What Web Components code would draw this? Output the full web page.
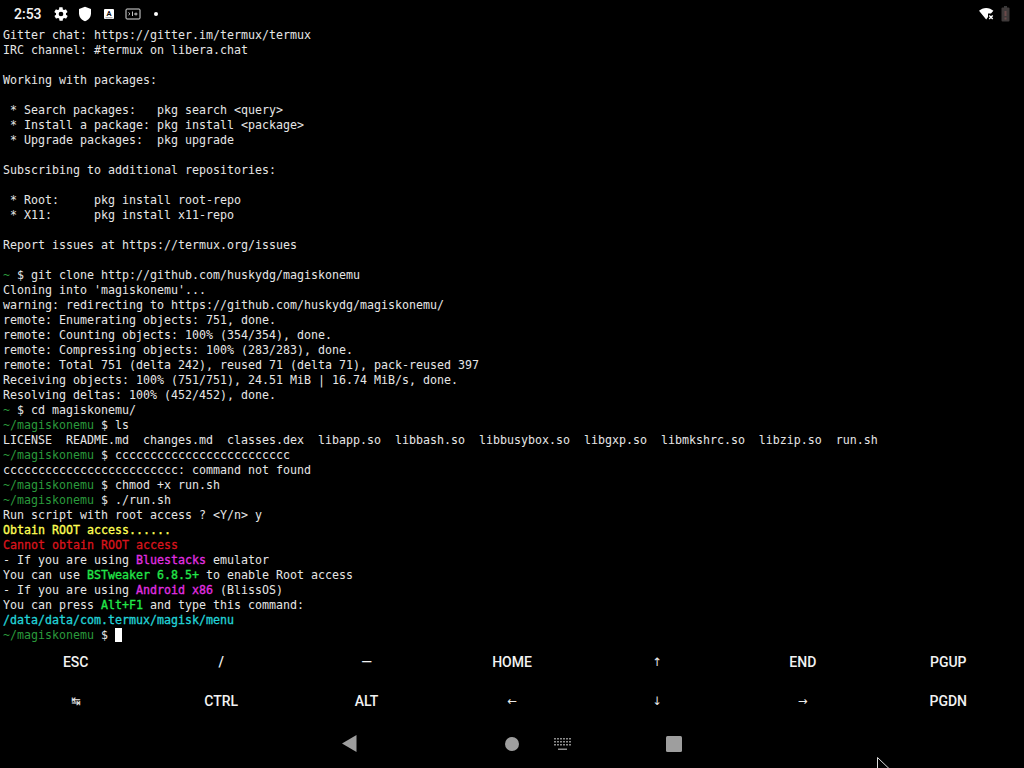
<!DOCTYPE html>
<html>
<head>
<meta charset="utf-8">
<title>Termux</title>
<style>
  html, body { margin: 0; padding: 0; background: #000; }
  body { width: 1024px; height: 768px; overflow: hidden; display: flex; flex-direction: column; position: relative; }
</style>
</head>
<body>
<status-bar></status-bar>
<term-view></term-view>
<extra-keys></extra-keys>
<nav-bar></nav-bar>
<mouse-pointer></mouse-pointer>

<script>
// status bar: clock + notification icons on the left, wifi + battery on the right
class StatusBar extends HTMLElement {
  constructor() {
    super();
    this.attachShadow({ mode: 'open' }).innerHTML = `
      <style>
        :host { display: flex; align-items: center; height: 27px; flex: none; padding: 0 14px 0 14px; color: #f4f4f4;
          font: 500 14px Roboto, "Liberation Sans", sans-serif; }
        .time { width: 39px; }
        .icons { display: flex; align-items: center; gap: 8px; }
        svg { display: block; }
        .right { margin-left: auto; display: flex; align-items: center; gap: 7px; }
      </style>
      <span class="time">2:53</span>
      <div class="icons">
        <svg width="16" height="16" viewBox="0 0 24 24" fill="#fff"><path d="M19.400 13c.100-.300.100-.700.100-1s0-.700-.100-1l2.100-1.600c.200-.200.200-.400.100-.600l-2-3.500c-.100-.200-.400-.300-.600-.200l-2.500 1c-.500-.400-1.100-.700-1.700-1l-.400-2.600c0-.300-.200-.500-.500-.500h-4c-.300 0-.500.200-.500.400l-.400 2.700c-.600.200-1.200.600-1.700 1l-2.500-1c-.200-.100-.500 0-.600.200l-2 3.500c-.100.200-.100.500.100.600L4.600 11c0 .300-.100.700-.100 1s0 .700.100 1l-2.100 1.600c-.200.200-.200.400-.100.600l2 3.500c.100.200.400.300.600.200l2.500-1c.500.400 1.100.700 1.700 1l.400 2.600c0 .300.200.500.500.500h4c.300 0 .500-.200.500-.400l.400-2.700c.600-.200 1.200-.600 1.700-1l2.500 1c.200.100.500 0 .600-.200l2-3.500c.100-.200.100-.500-.100-.600zM12 15.500a3.500 3.500 0 1 1 0-7 3.500 3.500 0 0 1 0 7z"/></svg>
        <svg width="16" height="16" viewBox="0 0 24 24" fill="#fff"><path d="M12 1 3 4.500v6.500c0 5.500 3.800 10.500 9 12 5.200-1.500 9-6.500 9-12V4.500z"/></svg>
        <svg width="16" height="16" viewBox="0 0 16 16"><rect x="3" y="3" width="10" height="10" rx="1" fill="#fff"/><text x="8" y="10.200" text-anchor="middle" font-family="Roboto" font-weight="700" font-size="7.500" fill="#111">A</text><rect x="4.500" y="11.300" width="7" height="1" fill="#888"/></svg>
        <svg width="16" height="14" viewBox="0 0 16 14" fill="none" stroke="#ddd"><rect x="1" y="2" width="14" height="10" rx="1"/><path d="M3.500 5.500 5 6.800 3.500 8.100M7.500 4.500v4.500M9 7h3.500M11 5.500v3" stroke-width=".9"/></svg>
        <svg width="4" height="4" viewBox="0 0 4 4" style="margin-left:5px"><circle cx="2" cy="2" r="2" fill="#fff"/></svg>
      </div>
      <div class="right">
        <svg width="15" height="12" viewBox="0 0 15 12"><path d="M0 2.800C1.900 1.100 4.400 0 7.200 0s5.300 1.100 7.200 2.800L12 5.500H9v3.500L7.200 11.500z" fill="#fff"/><path d="M10.200 7.500l3.500 3.500M13.700 7.500l-3.500 3.500" stroke="#fff" stroke-width="1.400"/></svg>
        <svg width="9" height="16" viewBox="0 0 9 16"><rect x="3" y="0" width="3" height="2" fill="#3a3a3a"/><rect x="0.500" y="1.500" width="8" height="14" rx="1" fill="#3f3a3a"/><rect x="3.500" y="5" width="2" height="5" fill="#6b4a4a"/><rect x="3.500" y="11.500" width="2" height="2" fill="#6b4a4a"/></svg>
      </div>`;
  }
}

// terminal output, one row per line
const P = '<span class="p">~/magiskonemu</span> $ ';
const HOME = '<span class="p">~</span> $ ';
const TERM_LINES = [
  'Gitter chat: https://gitter.im/termux/termux',
  'IRC channel: #termux on libera.chat',
  '',
  'Working with packages:',
  '',
  ' * Search packages:   pkg search &lt;query&gt;',
  ' * Install a package: pkg install &lt;package&gt;',
  ' * Upgrade packages:  pkg upgrade',
  '',
  'Subscribing to additional repositories:',
  '',
  ' * Root:     pkg install root-repo',
  ' * X11:      pkg install x11-repo',
  '',
  'Report issues at https://termux.org/issues',
  '',
  HOME + 'git clone http://github.com/huskydg/magiskonemu',
  "Cloning into 'magiskonemu'...",
  'warning: redirecting to https://github.com/huskydg/magiskonemu/',
  'remote: Enumerating objects: 751, done.',
  'remote: Counting objects: 100% (354/354), done.',
  'remote: Compressing objects: 100% (283/283), done.',
  'remote: Total 751 (delta 242), reused 71 (delta 71), pack-reused 397',
  'Receiving objects: 100% (751/751), 24.51 MiB | 16.74 MiB/s, done.',
  'Resolving deltas: 100% (452/452), done.',
  HOME + 'cd magiskonemu/',
  P + 'ls',
  'LICENSE  README.md  changes.md  classes.dex  libapp.so  libbash.so  libbusybox.so  libgxp.so  libmkshrc.so  libzip.so  run.sh',
  P + 'ccccccccccccccccccccccccc',
  'ccccccccccccccccccccccccc: command not found',
  P + 'chmod +x run.sh',
  P + './run.sh',
  'Run script with root access ? &lt;Y/n&gt; y',
  '<b class="y">Obtain ROOT access......</b>',
  '<b class="r">Cannot obtain ROOT access</b>',
  '- If you are using <b class="m">Bluestacks</b> emulator',
  'You can use <b class="g">BSTweaker 6.8.5+</b> to enable Root access',
  '- If you are using <b class="m">Android x86</b> (BlissOS)',
  'You can press <b class="g">Alt+F1</b> and type this command:',
  '<b class="c">/data/data/com.termux/magisk/menu</b>',
  P + '<span class="cur"> </span>',
];

class TermView extends HTMLElement {
  constructor() {
    super();
    const rows = TERM_LINES.map(l => `<div class="row">${l}</div>`).join('');
    this.attachShadow({ mode: 'open' }).innerHTML = `
      <style>
        :host { display: block; flex: none; height: 615px; padding: 1px 0 0 3px; color: #e6e6e6; overflow: hidden;
          font: 11.630px/15px "DejaVu Sans Mono", monospace; }
        .row { height: 15px; white-space: pre; }
        .p { color: #2a9a3c; }
        /* terminal fake bold: same glyphs, thickened */
        b { font-weight: 400; -webkit-text-stroke: .3px currentColor; }
        .y { color: #ffff54; }
        .r { color: #d8141c; }
        .m { color: #e22fe2; }
        .g { color: #22e84a; }
        .c { color: #22d3d8; }
        .cur { background: #fff; }
      </style>
      ${rows}`;
  }
}

// two rows of extra terminal keys
const KEYS = ['ESC', '/', '―', 'HOME', '↑', 'END', 'PGUP', '↹', 'CTRL', 'ALT', '←', '↓', '→', 'PGDN'];

class ExtraKeys extends HTMLElement {
  constructor() {
    super();
    const cells = KEYS.map(k => {
      const small = k.length === 1 && k !== '/' && k !== '―';
      return `<span class="${small ? 'sym' : ''}">${k}</span>`;
    }).join('');
    this.attachShadow({ mode: 'open' }).innerHTML = `
      <style>
        :host { display: grid; flex: none; grid-template-columns: repeat(7, 1fr); grid-auto-rows: 38.500px; height: 77px; padding: 0 3px; color: #f2f2f2;
          font: 500 14px Roboto, "Liberation Sans", sans-serif; }
        span { display: flex; align-items: center; justify-content: center; }
        /* opacity keeps the thin arrows free of coloured subpixel fringes */
        .sym { font-size: 11.500px; font-family: "DejaVu Sans", sans-serif; font-weight: 400; color: #fff; opacity: .92; }
      </style>
      ${cells}`;
  }
}

class NavBar extends HTMLElement {
  constructor() {
    super();
    this.attachShadow({ mode: 'open' }).innerHTML = `
      <style>
        :host { display: flex; flex: none; align-items: center; height: 48px; padding: 0 0 1px 342px; box-sizing: border-box; }
        svg { display: block; flex: none; }
        .home { margin-left: 148px; }
        .kbd { margin-left: 35px; }
        .recent { margin-left: 95px; }
      </style>
      <svg width="15" height="17" viewBox="0 0 15 17"><path d="M14.500 0v17L0 8.500z" fill="#9e9e9e"/></svg>
      <svg class="home" width="14" height="14" viewBox="0 0 14 14"><circle cx="7" cy="7" r="7" fill="#9e9e9e"/></svg>
      <svg class="kbd" width="17" height="12" viewBox="0 0 17 12" fill="#8c8c8c"><path d="M0 0h2v1.500H0zM3 0h2v1.500H3zM6 0h2v1.500H6zM9 0h2v1.500H9zM12 0h2v1.500h-2zM15 0h2v1.500h-2zM0 3h2v1.500H0zM3 3h2v1.500H3zM6 3h2v1.500H6zM9 3h2v1.500H9zM12 3h2v1.500h-2zM15 3h2v1.500h-2zM0 6h2v1.500H0zM3 6h2v1.500H3zM6 6h2v1.500H6zM9 6h2v1.500H9zM12 6h2v1.500h-2zM15 6h2v1.500h-2zM4 10.500h9V12H4z"/></svg>
      <svg class="recent" width="16" height="16" viewBox="0 0 16 16"><rect width="16" height="16" rx="1.500" fill="#9e9e9e"/></svg>`;
  }
}

// mouse arrow clipped by the bottom edge, lies over the screen
class MousePointer extends HTMLElement {
  constructor() {
    super();
    this.attachShadow({ mode: 'open' }).innerHTML = `
      <style>
        :host { position: absolute; left: 877px; top: 757px; display: block; }
        svg { display: block; }
      </style>
      <svg width="14" height="20" viewBox="0 0 14 20"><path d="M.500.500v16l4-3.500 3 6.500 2.500-1-3-6.500h5.500z" fill="#000" stroke="#ddd"/></svg>`;
  }
}

customElements.define('status-bar', StatusBar);
customElements.define('term-view', TermView);
customElements.define('extra-keys', ExtraKeys);
customElements.define('nav-bar', NavBar);
customElements.define('mouse-pointer', MousePointer);
</script>
</body>
</html>
